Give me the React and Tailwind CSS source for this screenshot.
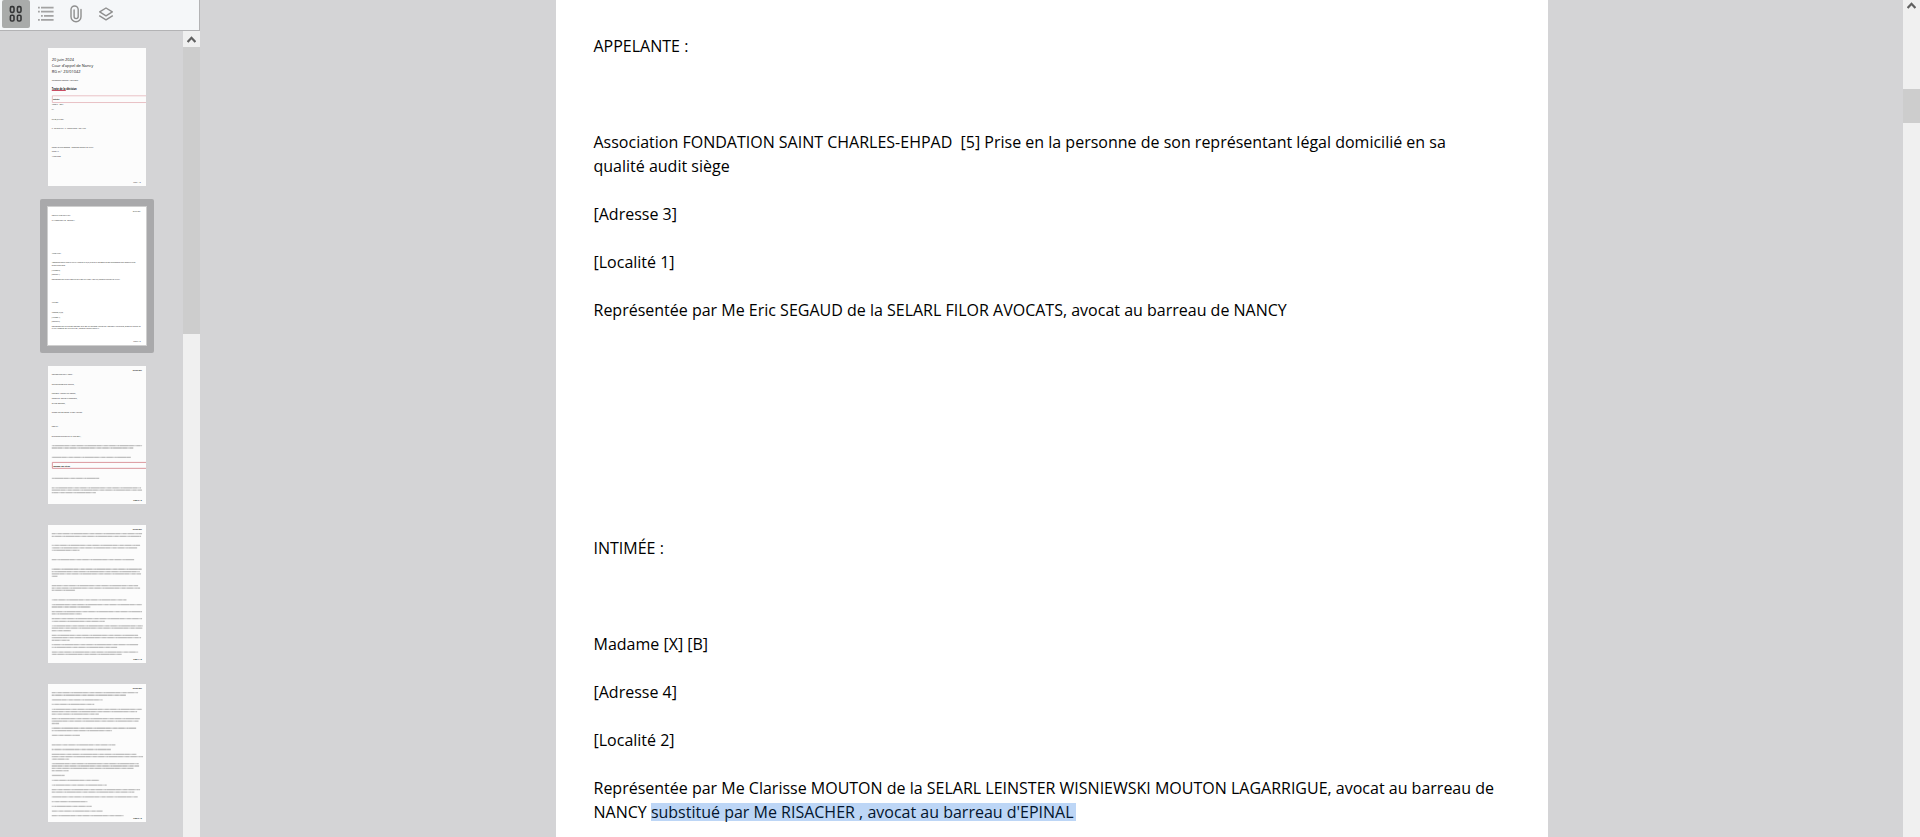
import React, { useState } from "react";
import clsx from "clsx";

// Text on the thumbnails, in page units (992 x 1397): [x, baseline, size, text, bold]
const PAGES = [
    {
        id: 1,
        paper: "bg-[#fcfcfc]",
        text: [
            [38, 128, 40, "20 juin 2024"],
            [38, 189, 40, "Cour d'appel de Nancy"],
            [38, 250, 40, "RG n° 23/01042"],
            [38, 333, 22, "Chambre sociale-1ère sect"],
            [38, 424, 26, "Texte de la décision", true],
            [50, 526, 20, "Entête", true],
            [38, 580, 16, "ARRÊT N° /2024"],
            [38, 628, 16, "PH"],
            [38, 724, 16, "DU 20 JUIN 2024"],
            [38, 819, 16, "N° RG 23/01042 - N° Portalis DBVE-V-B7H-FFTP"],
            [38, 1008, 16, "Conseil de Prud'hommes - Formation paritaire de NANCY"],
            [38, 1056, 16, "22/00117"],
            [38, 1104, 16, "15 mai 2023"],
            [864, 1362, 16, "Page 1 / 8"],
        ],
        underline: [38, 180, 430],
        box: [44, 484, 68],
    },
    {
        id: 2,
        paper: "bg-white",
        text: [
            [858, 48, 14, "20 juin 2024"],
            [38, 94, 16, "COUR D'APPEL DE NANCY"],
            [38, 142, 16, "CHAMBRE SOCIALE - SECTION 1"],
            [38, 476, 16, "APPELANTE :"],
            [38, 570, 16, "Association FONDATION SAINT CHARLES-EHPAD [5] Prise en la personne de son représentant légal domicilié en sa"],
            [38, 594, 16, "qualité audit siège"],
            [38, 644, 16, "[Adresse 3]"],
            [38, 692, 16, "[Localité 1]"],
            [38, 740, 16, "Représentée par Me Eric SEGAUD de la SELARL FILOR AVOCATS, avocat au barreau de NANCY"],
            [38, 976, 16, "INTIMÉE :"],
            [38, 1072, 16, "Madame [X] [B]"],
            [38, 1120, 16, "[Adresse 4]"],
            [38, 1168, 16, "[Localité 2]"],
            [38, 1214, 16, "Représentée par Me Clarisse MOUTON de la SELARL LEINSTER WISNIEWSKI MOUTON LAGARRIGUE, avocat au barreau de"],
            [38, 1238, 16, "NANCY substitué par Me RISACHER , avocat au barreau d'EPINAL"],
            [864, 1362, 16, "Page 2 / 8"],
        ],
    },
    {
        id: 3,
        paper: "bg-[#fcfcfc]",
        text: [
            [858, 46, 16, "20 juin 2024", true],
            [38, 94, 16, "COMPOSITION DE LA COUR :"],
            [38, 192, 16, "Lors des débats et du délibéré,"],
            [38, 286, 16, "Président : WEISSMANN Raphaël,"],
            [38, 334, 16, "Conseillers : BRUNEAU Dominique,"],
            [38, 382, 16, "STANEK Stéphane,"],
            [38, 478, 16, "Greffier lors des débats : RIVORY Laurène"],
            [38, 620, 16, "DÉBATS :"],
            [38, 718, 16, "En audience publique du 21 Mars 2024 ;"],
            [52, 1018, 22, "Exposé du litige", true],
            [864, 1366, 18, "Page 3 / 8", true],
        ],
        // grey rows: [y, width]
        rows: [[807, 914], [830, 826], [925, 800], [1137, 480], [1233, 904], [1257, 914], [1281, 446]],
        box: [44, 976, 60],
    },
    {
        id: 4,
        paper: "bg-[#fcfcfc]",
        text: [[858, 46, 16, "20 juin 2024", true], [864, 1366, 18, "Page 4 / 8", true]],
        rows: [
            [88, 914], [115, 904], [207, 894], [231, 864], [256, 280], [351, 834],
            [448, 910], [471, 890], [495, 904], [519, 60], [614, 874], [638, 894], [661, 236],
            [759, 756], [805, 914], [830, 390], [877, 914], [900, 304], [948, 914], [975, 536],
            [1021, 924], [1045, 918], [1070, 196], [1117, 874], [1141, 904], [1167, 180],
            [1212, 874], [1238, 662], [1286, 874], [1309, 710],
        ],
    },
    {
        id: 5,
        paper: "bg-[#fcfcfc]",
        text: [[858, 46, 16, "20 juin 2024", true], [864, 1366, 18, "Page 5 / 8", true]],
        rows: [
            [88, 874], [114, 750], [160, 514], [207, 430], [257, 914], [280, 864], [306, 476],
            [350, 894], [376, 880], [400, 74], [448, 854], [471, 610], [520, 284],
            [616, 644], [663, 598], [712, 858], [735, 924], [761, 176], [806, 880], [830, 884],
            [855, 828], [878, 170], [926, 130], [975, 480], [1023, 556], [1070, 894], [1095, 836],
            [1143, 870], [1190, 362], [1238, 404], [1286, 514], [1333, 728],
        ],
    },
];

const DOC = [
    { gap: "", text: "APPELANTE :" },
    {
        gap: "mt-[72px]",
        text: "Association FONDATION SAINT CHARLES-EHPAD \u00a0[5] Prise en la personne de son représentant légal domicilié en sa qualité audit siège",
    },
    { gap: "mt-6", text: "[Adresse 3]" },
    { gap: "mt-6", text: "[Localité 1]" },
    { gap: "mt-6", text: "Représentée par Me Eric SEGAUD de la SELARL FILOR AVOCATS, avocat au barreau de NANCY" },
    { gap: "mt-[214px]", text: "INTIMÉE :" },
    { gap: "mt-[72px]", text: "Madame [X] [B]" },
    { gap: "mt-6", text: "[Adresse 4]" },
    { gap: "mt-6", text: "[Localité 2]" },
    {
        gap: "mt-6",
        text: "Représentée par Me Clarisse MOUTON de la SELARL LEINSTER WISNIEWSKI MOUTON LAGARRIGUE, avocat au barreau de NANCY ",
        marked: "substitué par Me RISACHER , avocat au barreau d'EPINAL",
    },
];

const GridIcon = () => (
    <svg width="14" height="18" viewBox="0 0 14 18" fill="none" stroke="#343536" strokeWidth="1.6">
        <rect x="1.4" y="1.6" width="3.6" height="5.8" rx="1.3" />
        <rect x="8.4" y="1.6" width="3.6" height="5.8" rx="1.3" />
        <rect x="1.4" y="10.2" width="3.6" height="5.8" rx="1.3" />
        <rect x="8.4" y="10.2" width="3.6" height="5.8" rx="1.3" />
    </svg>
);

const OutlineIcon = () => (
    <svg width="16" height="16" viewBox="0 0 16 16" fill="none" stroke="#a3a3a3" strokeWidth="1.6">
        <path d="M0 1.6h1.8M3 1.6h12.6M0 5.6h1.8M3 5.6h12.6M3 9.9h1.8M6 9.9h9.6M0 13.9h1.8M3 13.9h12.6" />
    </svg>
);

const ClipIcon = () => (
    <svg width="12" height="18" viewBox="0 0 12 18" fill="none" stroke="#8f8f8f" strokeWidth="1.4" strokeLinecap="round">
        <path d="M11 4.5v7.2a5 5 0 0 1-10 0V4.6a3.6 3.6 0 0 1 7.2 0v7a2 2 0 0 1-4.1 0V5" />
    </svg>
);

const LayersIcon = () => (
    <svg width="16" height="14" viewBox="0 0 16 14" fill="none" stroke="#8f8f8f" strokeWidth="1.4" strokeLinejoin="round">
        <path d="M8 1l6.3 3.9L8 8.8 1.7 4.9z" />
        <path d="M1.2 8.6L8 12.8l6.8-4.2" />
    </svg>
);

const TOOLS = [
    { id: "thumbs", label: "Vignettes", icon: <GridIcon /> },
    { id: "outline", label: "Plan du document", icon: <OutlineIcon /> },
    { id: "files", label: "Pièces jointes", icon: <ClipIcon /> },
    { id: "layers", label: "Calques", icon: <LayersIcon /> },
];

const Arrow = () => (
    <svg width="9" height="7" viewBox="0 0 9 7" fill="none" stroke="#606060" strokeWidth="2.2">
        <path d="M0.6 6L4.5 1.8 8.4 6" />
    </svg>
);

const Thumbnail = ({ page, selected, onSelect }) => (
    <button
        type="button"
        aria-label={`Page ${page.id}`}
        onClick={onSelect}
        className={clsx("shrink-0 rounded-[2px] p-2", selected && "bg-[#a9a9ab]")}
    >
        <svg
            viewBox="0 0 992 1397"
            className={clsx("block h-[138px] w-[98px]", page.paper, selected && "outline outline-[#cfcfcf]")}
            fontFamily="'Open Sans', sans-serif"
        >
            {page.rows?.map(([y, width]) => (
                <g key={y} stroke="#666" strokeWidth="13">
                    <path d={`M38 ${y}h${width}`} opacity="0.28" />
                    <path
                        d={`M38 ${y}h${width}`}
                        strokeDasharray="34 19 58 27 12 10 86 8 44 30"
                        strokeDashoffset={y * 3}
                        opacity="0.16"
                    />
                </g>
            ))}
            {page.underline && (
                <path d={`M${page.underline[0]} ${page.underline[2]}h${page.underline[1] - 38}`} stroke="#c8455c" strokeWidth="10" />
            )}
            {page.box && (
                <path
                    d={`M992 ${page.box[1]}H${page.box[0]}v${page.box[2]}H992`}
                    fill="none"
                    stroke={page.id === 1 ? "#e6b9bd" : "#d58a90"}
                    strokeWidth="9"
                />
            )}
            {page.text.map(([x, y, size, text, bold]) => (
                <text key={text} x={x} y={y} fontSize={size} fontWeight={bold ? 700 : 400} fill="#111">
                    {text}
                </text>
            ))}
        </svg>
    </button>
);

export default function App() {
    const [tool, setTool] = useState("thumbs");
    const [current, setCurrent] = useState(2);

    return (
        <div className="flex h-screen overflow-hidden bg-[#d4d4d6] font-['Open_Sans',sans-serif] text-black">
            <aside className="flex w-[200px] shrink-0 flex-col">
                <div className="flex h-[31px] shrink-0 items-start gap-[2px] border-r border-b border-[#b3b3b5] bg-[#f5f7f9] pl-[2px]">
                    {TOOLS.map((t) => (
                        <button
                            key={t.id}
                            type="button"
                            title={t.label}
                            onClick={() => setTool(t.id)}
                            className={clsx("flex h-7 w-7 items-center justify-center rounded-[2px]", tool === t.id && "bg-[#a9abaa]")}
                        >
                            {t.icon}
                        </button>
                    ))}
                </div>

                <div className="flex min-h-0 flex-1">
                    <div className="flex flex-1 flex-col items-center gap-[5px] overflow-hidden pt-[9px] pl-[11px]">
                        {PAGES.map((page) => (
                            <Thumbnail
                                key={page.id}
                                page={page}
                                selected={page.id === current}
                                onSelect={() => setCurrent(page.id)}
                            />
                        ))}
                    </div>
                    <div className="flex w-[17px] flex-col bg-[#f0f0f0]">
                        <button type="button" aria-label="Défiler vers le haut" className="flex h-4 items-center justify-center">
                            <Arrow />
                        </button>
                        <div className="h-[287px] bg-[#cdcdcd]"></div>
                    </div>
                </div>
            </aside>

            <main className="flex flex-1 justify-center overflow-hidden">
                <article className="w-[992px] bg-white pt-[34px] pr-[50px] pl-[38px] text-base">
                    {DOC.map((p) => (
                        <p key={p.text} className={p.gap}>
                            {p.text}
                            {p.marked && (
                                <mark className="inline-block bg-[#bdd6f6] pr-[2px] leading-[18px] text-[#04152d]">
                                    {p.marked}
                                </mark>
                            )}
                        </p>
                    ))}
                </article>
            </main>

            <div className="flex w-[17px] shrink-0 flex-col bg-[#f0f0f0]">
                <button type="button" aria-label="Page précédente" className="flex h-[10px] items-center justify-center">
                    <Arrow />
                </button>
                <div className="mt-[79px] h-[34px] bg-[#cdcdcd]"></div>
            </div>
        </div>
    );
}
